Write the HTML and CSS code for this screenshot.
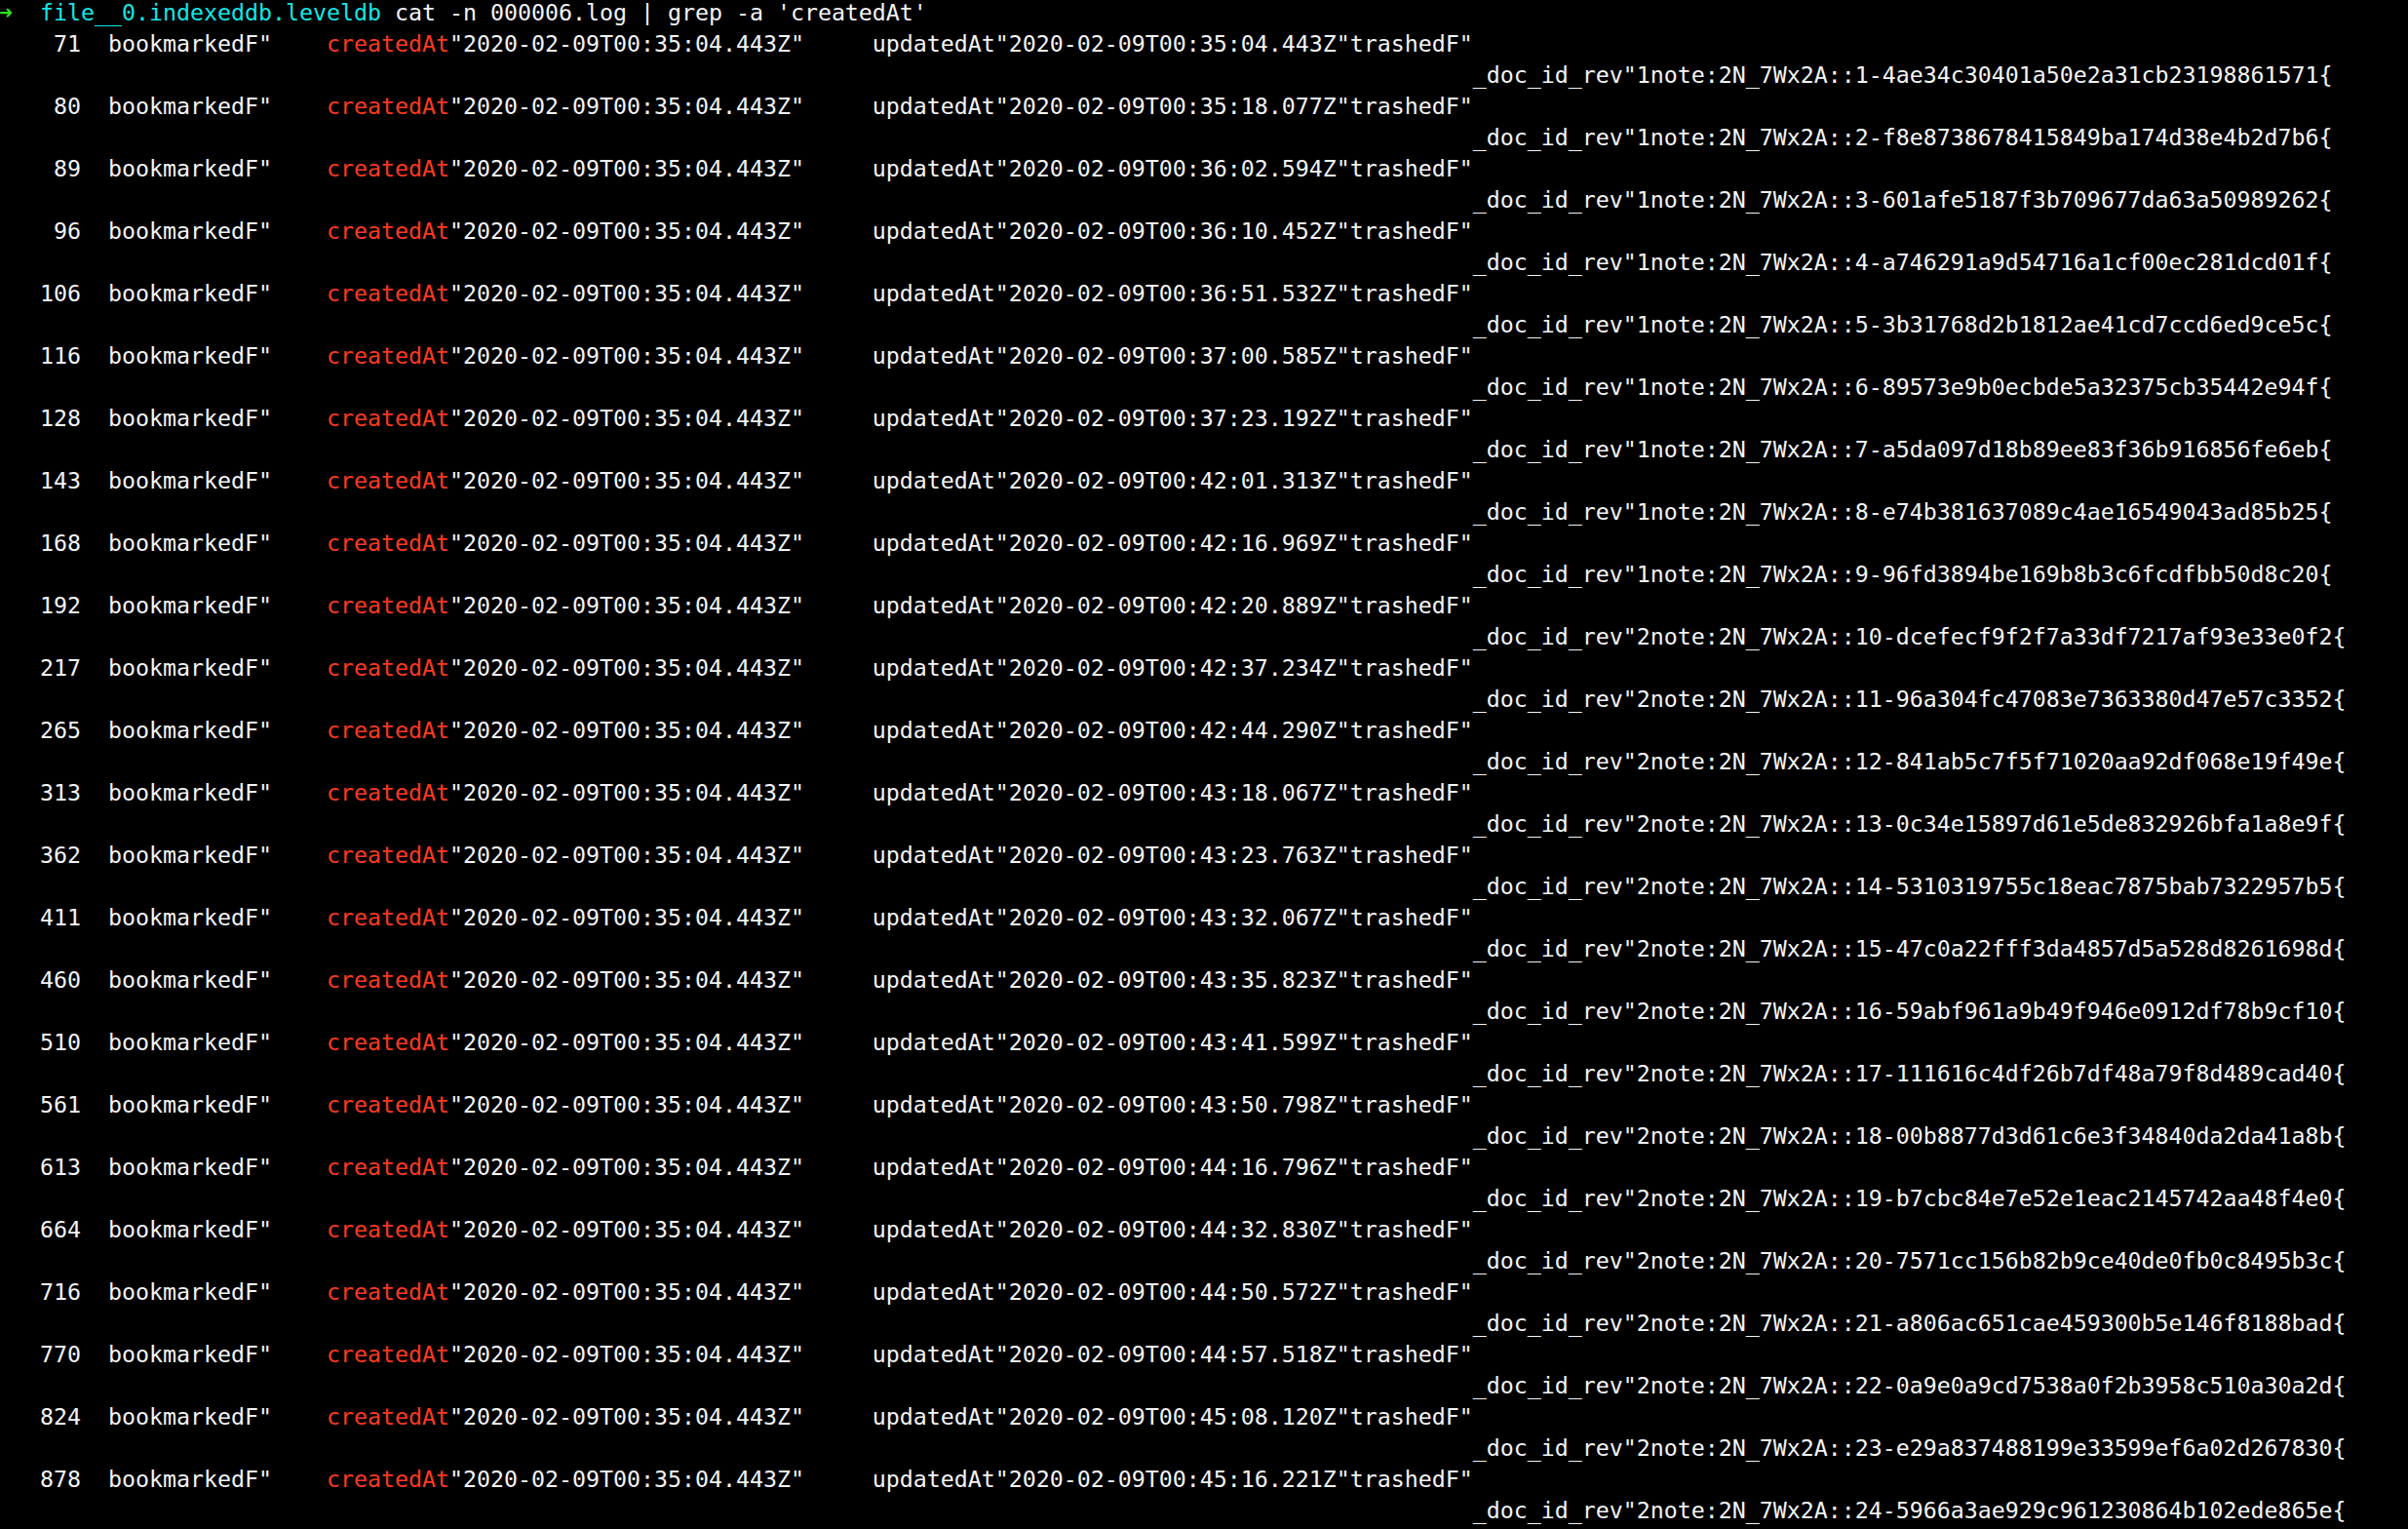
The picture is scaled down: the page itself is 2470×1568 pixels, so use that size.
FILE: index.html
```html
<!DOCTYPE html>
<html lang="en">
<head>
    <meta charset="UTF-8">
    <title>Terminal</title>
    <link rel="stylesheet" href="styles.css">
</head>
<body>

    <div class="terminal">
        <!-- Prompt -->
        <div class="line"><span class="arrow">➜</span>  <span class="dir">file__0.indexeddb.leveldb</span> cat -n 000006.log | grep -a 'createdAt'</div>

        <!-- Lignes du log -->
        <div class="line">    71  bookmarkedF"    <span class="match">createdAt</span>"2020-02-09T00:35:04.443Z"     updatedAt"2020-02-09T00:35:04.443Z"trashedF"</div>
        <div class="line rev">_doc_id_rev"1note:2N_7Wx2A::1-4ae34c30401a50e2a31cb23198861571{</div>
        <div class="line">    80  bookmarkedF"    <span class="match">createdAt</span>"2020-02-09T00:35:04.443Z"     updatedAt"2020-02-09T00:35:18.077Z"trashedF"</div>
        <div class="line rev">_doc_id_rev"1note:2N_7Wx2A::2-f8e8738678415849ba174d38e4b2d7b6{</div>
        <div class="line">    89  bookmarkedF"    <span class="match">createdAt</span>"2020-02-09T00:35:04.443Z"     updatedAt"2020-02-09T00:36:02.594Z"trashedF"</div>
        <div class="line rev">_doc_id_rev"1note:2N_7Wx2A::3-601afe5187f3b709677da63a50989262{</div>
        <div class="line">    96  bookmarkedF"    <span class="match">createdAt</span>"2020-02-09T00:35:04.443Z"     updatedAt"2020-02-09T00:36:10.452Z"trashedF"</div>
        <div class="line rev">_doc_id_rev"1note:2N_7Wx2A::4-a746291a9d54716a1cf00ec281dcd01f{</div>
        <div class="line">   106  bookmarkedF"    <span class="match">createdAt</span>"2020-02-09T00:35:04.443Z"     updatedAt"2020-02-09T00:36:51.532Z"trashedF"</div>
        <div class="line rev">_doc_id_rev"1note:2N_7Wx2A::5-3b31768d2b1812ae41cd7ccd6ed9ce5c{</div>
        <div class="line">   116  bookmarkedF"    <span class="match">createdAt</span>"2020-02-09T00:35:04.443Z"     updatedAt"2020-02-09T00:37:00.585Z"trashedF"</div>
        <div class="line rev">_doc_id_rev"1note:2N_7Wx2A::6-89573e9b0ecbde5a32375cb35442e94f{</div>
        <div class="line">   128  bookmarkedF"    <span class="match">createdAt</span>"2020-02-09T00:35:04.443Z"     updatedAt"2020-02-09T00:37:23.192Z"trashedF"</div>
        <div class="line rev">_doc_id_rev"1note:2N_7Wx2A::7-a5da097d18b89ee83f36b916856fe6eb{</div>
        <div class="line">   143  bookmarkedF"    <span class="match">createdAt</span>"2020-02-09T00:35:04.443Z"     updatedAt"2020-02-09T00:42:01.313Z"trashedF"</div>
        <div class="line rev">_doc_id_rev"1note:2N_7Wx2A::8-e74b381637089c4ae16549043ad85b25{</div>
        <div class="line">   168  bookmarkedF"    <span class="match">createdAt</span>"2020-02-09T00:35:04.443Z"     updatedAt"2020-02-09T00:42:16.969Z"trashedF"</div>
        <div class="line rev">_doc_id_rev"1note:2N_7Wx2A::9-96fd3894be169b8b3c6fcdfbb50d8c20{</div>
        <div class="line">   192  bookmarkedF"    <span class="match">createdAt</span>"2020-02-09T00:35:04.443Z"     updatedAt"2020-02-09T00:42:20.889Z"trashedF"</div>
        <div class="line rev">_doc_id_rev"2note:2N_7Wx2A::10-dcefecf9f2f7a33df7217af93e33e0f2{</div>
        <div class="line">   217  bookmarkedF"    <span class="match">createdAt</span>"2020-02-09T00:35:04.443Z"     updatedAt"2020-02-09T00:42:37.234Z"trashedF"</div>
        <div class="line rev">_doc_id_rev"2note:2N_7Wx2A::11-96a304fc47083e7363380d47e57c3352{</div>
        <div class="line">   265  bookmarkedF"    <span class="match">createdAt</span>"2020-02-09T00:35:04.443Z"     updatedAt"2020-02-09T00:42:44.290Z"trashedF"</div>
        <div class="line rev">_doc_id_rev"2note:2N_7Wx2A::12-841ab5c7f5f71020aa92df068e19f49e{</div>
        <div class="line">   313  bookmarkedF"    <span class="match">createdAt</span>"2020-02-09T00:35:04.443Z"     updatedAt"2020-02-09T00:43:18.067Z"trashedF"</div>
        <div class="line rev">_doc_id_rev"2note:2N_7Wx2A::13-0c34e15897d61e5de832926bfa1a8e9f{</div>
        <div class="line">   362  bookmarkedF"    <span class="match">createdAt</span>"2020-02-09T00:35:04.443Z"     updatedAt"2020-02-09T00:43:23.763Z"trashedF"</div>
        <div class="line rev">_doc_id_rev"2note:2N_7Wx2A::14-5310319755c18eac7875bab7322957b5{</div>
        <div class="line">   411  bookmarkedF"    <span class="match">createdAt</span>"2020-02-09T00:35:04.443Z"     updatedAt"2020-02-09T00:43:32.067Z"trashedF"</div>
        <div class="line rev">_doc_id_rev"2note:2N_7Wx2A::15-47c0a22fff3da4857d5a528d8261698d{</div>
        <div class="line">   460  bookmarkedF"    <span class="match">createdAt</span>"2020-02-09T00:35:04.443Z"     updatedAt"2020-02-09T00:43:35.823Z"trashedF"</div>
        <div class="line rev">_doc_id_rev"2note:2N_7Wx2A::16-59abf961a9b49f946e0912df78b9cf10{</div>
        <div class="line">   510  bookmarkedF"    <span class="match">createdAt</span>"2020-02-09T00:35:04.443Z"     updatedAt"2020-02-09T00:43:41.599Z"trashedF"</div>
        <div class="line rev">_doc_id_rev"2note:2N_7Wx2A::17-111616c4df26b7df48a79f8d489cad40{</div>
        <div class="line">   561  bookmarkedF"    <span class="match">createdAt</span>"2020-02-09T00:35:04.443Z"     updatedAt"2020-02-09T00:43:50.798Z"trashedF"</div>
        <div class="line rev">_doc_id_rev"2note:2N_7Wx2A::18-00b8877d3d61c6e3f34840da2da41a8b{</div>
        <div class="line">   613  bookmarkedF"    <span class="match">createdAt</span>"2020-02-09T00:35:04.443Z"     updatedAt"2020-02-09T00:44:16.796Z"trashedF"</div>
        <div class="line rev">_doc_id_rev"2note:2N_7Wx2A::19-b7cbc84e7e52e1eac2145742aa48f4e0{</div>
        <div class="line">   664  bookmarkedF"    <span class="match">createdAt</span>"2020-02-09T00:35:04.443Z"     updatedAt"2020-02-09T00:44:32.830Z"trashedF"</div>
        <div class="line rev">_doc_id_rev"2note:2N_7Wx2A::20-7571cc156b82b9ce40de0fb0c8495b3c{</div>
        <div class="line">   716  bookmarkedF"    <span class="match">createdAt</span>"2020-02-09T00:35:04.443Z"     updatedAt"2020-02-09T00:44:50.572Z"trashedF"</div>
        <div class="line rev">_doc_id_rev"2note:2N_7Wx2A::21-a806ac651cae459300b5e146f8188bad{</div>
        <div class="line">   770  bookmarkedF"    <span class="match">createdAt</span>"2020-02-09T00:35:04.443Z"     updatedAt"2020-02-09T00:44:57.518Z"trashedF"</div>
        <div class="line rev">_doc_id_rev"2note:2N_7Wx2A::22-0a9e0a9cd7538a0f2b3958c510a30a2d{</div>
        <div class="line">   824  bookmarkedF"    <span class="match">createdAt</span>"2020-02-09T00:35:04.443Z"     updatedAt"2020-02-09T00:45:08.120Z"trashedF"</div>
        <div class="line rev">_doc_id_rev"2note:2N_7Wx2A::23-e29a837488199e33599ef6a02d267830{</div>
        <div class="line">   878  bookmarkedF"    <span class="match">createdAt</span>"2020-02-09T00:35:04.443Z"     updatedAt"2020-02-09T00:45:16.221Z"trashedF"</div>
        <div class="line rev">_doc_id_rev"2note:2N_7Wx2A::24-5966a3ae929c961230864b102ede865e{</div>
    </div>

</body>
</html>
```
FILE: styles.css
```css
/* Styles généraux */
html, body {
    background: #000000;
}

body {
    margin: 0;
    padding: 0;
    height: 100vh;
    overflow: hidden;
}

.terminal {
    font-family: "DejaVu Sans Mono", "Liberation Mono", monospace;
    font-size: 23.25px;
    line-height: 32px;
    color: #f4f4f4;
    margin: -3px 0 0 -1px;
}

.line {
    white-space: pre;
    height: 32px;
}

/* Suite de ligne renvoyée par le terminal */
.rev {
    padding-left: 108ch;
}

.arrow {
    color: #2fe11f;
    font-weight: bold;
}

.dir {
    color: #14e6e6;
}

.match {
    color: #fc3a20;
}
```
